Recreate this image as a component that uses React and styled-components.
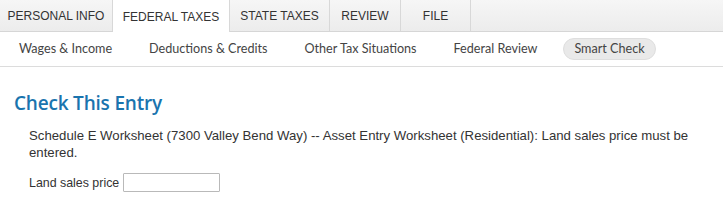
import React from "react";
import styled, { createGlobalStyle } from "styled-components";

const GlobalStyle = createGlobalStyle`
  html, body {
    margin: 0;
    padding: 0;
    background: #fff;
  }
`;

const Page = styled.div`
  width: 723px;
  height: 204px;
  overflow: hidden;
  background: #fff;
`;

const TabBar = styled.div`
  display: flex;
  height: 32px;
  background: linear-gradient(#f6f6f6, #ececec);
  border-bottom: 1px solid #d6d6d6;
  box-sizing: border-box;
`;

const Tab = styled.div`
  display: flex;
  align-items: center;
  justify-content: center;
  width: ${(p) => p.$w}px;
  height: ${(p) => (p.$active ? "32px" : "31px")};
  box-sizing: border-box;
  border-right: 1px solid #d8d8d8;
  background: ${(p) => (p.$active ? "#fff" : "transparent")};
  font-family: "Liberation Sans", Arial, sans-serif;
  font-size: 12px;
  color: #333;
  padding-top: 1px;
`;

const SubNav = styled.div`
  display: flex;
  align-items: center;
  height: 34px;
  border-bottom: 1px solid #dcdcdc;
  padding-left: 19px;
  gap: 37px;
  font-family: "Lato", "Open Sans", sans-serif;
  font-size: 12.6px;
  color: #444;
`;

const SubItem = styled.div`
  padding: ${(p) => (p.$pill ? "2px 10px" : "0")};
  margin-left: ${(p) => (p.$pill ? "-11px" : "0")};
  border-radius: 11px;
  background: ${(p) => (p.$pill ? "#e9e9e9" : "transparent")};
  border: ${(p) => (p.$pill ? "1px solid #dedede" : "none")};
  line-height: 16px;
`;

const Content = styled.div`
  padding: 24px 0 0 14px;
`;

const Heading = styled.h1`
  margin: 0;
  font-family: "Open Sans", "Lato", sans-serif;
  font-weight: 600;
  font-size: 19px;
  line-height: 24px;
  color: #1a74ae;
  letter-spacing: -0.2px;
`;

const Body = styled.div`
  padding: 12px 0 0 15px;
  font-family: "Liberation Sans", Arial, sans-serif;
  font-size: 13.2px;
  color: #333;
`;

const Message = styled.p`
  margin: 0;
  line-height: 17px;
  width: 672px;
`;

const Field = styled.label`
  display: flex;
  align-items: center;
  gap: 4px;
  margin-top: 12px;
  font-size: 12.4px;
`;

const Input = styled.input`
  width: 97px;
  height: 19px;
  box-sizing: border-box;
  border: 1px solid #b9b9b9;
  border-radius: 1px;
  padding: 0 3px;
  font-family: "Liberation Sans", Arial, sans-serif;
  font-size: 13px;
`;

const tabs = [
  { label: "PERSONAL INFO", w: 113 },
  { label: "FEDERAL TAXES", w: 117, active: true },
  { label: "STATE TAXES", w: 100 },
  { label: "REVIEW", w: 71 },
  { label: "FILE", w: 70 },
];

const subItems = [
  "Wages & Income",
  "Deductions & Credits",
  "Other Tax Situations",
  "Federal Review",
];

export default function App() {
  return (
    <Page>
      <GlobalStyle />
      <TabBar>
        {tabs.map((t) => (
          <Tab key={t.label} $w={t.w} $active={t.active}>
            {t.label}
          </Tab>
        ))}
      </TabBar>
      <SubNav>
        {subItems.map((s) => (
          <SubItem key={s}>{s}</SubItem>
        ))}
        <SubItem $pill>Smart Check</SubItem>
      </SubNav>
      <Content>
        <Heading>Check This Entry</Heading>
        <Body>
          <Message>
            Schedule E Worksheet (7300 Valley Bend Way) -- Asset Entry Worksheet
            (Residential): Land sales price must be entered.
          </Message>
          <Field>
            Land sales price
            <Input type="text" />
          </Field>
        </Body>
      </Content>
    </Page>
  );
}
